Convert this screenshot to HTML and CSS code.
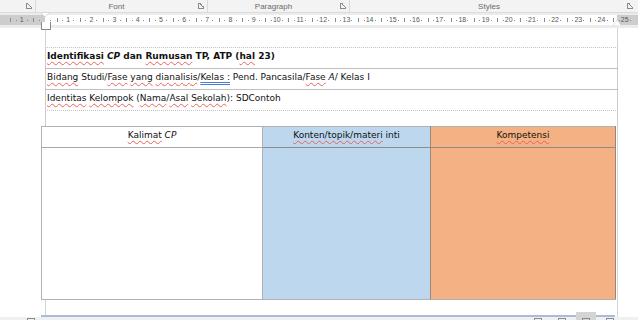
FILE: index.html
```html
<!DOCTYPE html>
<html lang="id">
<head>
    <meta charset="UTF-8">
    <title>Identifikasi CP - Word</title>
    <link rel="stylesheet" href="styles.css">
</head>
<body>
    <!-- ribbon group labels -->
    <div class="ribbon">
        <div class="group group-clip"><span class="launcher"></span></div>
        <div class="group group-font"><span class="group-label">Font</span><span class="launcher"></span></div>
        <div class="group group-para"><span class="group-label">Paragraph</span><span class="launcher"></span></div>
        <div class="group group-styles"><span class="group-label">Styles</span><span class="launcher"></span></div>
    </div>

    <!-- ruler -->
    <div class="ruler">
        <div class="ruler-strip">
            <div class="ruler-cells" id="ruler-cells"></div>
            <span class="indent indent-left"></span>
            <span class="indent indent-right"></span>
        </div>
    </div>

    <!-- document page -->
    <div class="page">
        <table class="info-table">
            <tr class="row-dotted"><td class="title"><u class="sp">Identifikasi</u> <i>CP</i> dan <u class="sp">Rumusan</u> TP, ATP (<u class="sp">hal</u> 23)</td></tr>
            <tr><td><u class="sp">Bidang</u> Studi/<u class="sp">Fase</u> <u class="sp">yang</u> <u class="sp">dianalisis</u>/<u class="gr">Kelas :</u> Pend. Pancasila/<u class="sp">Fase</u> <i>A</i>/ Kelas I</td></tr>
            <tr><td><u class="sp">Identitas</u> <u class="sp">Kelompok</u> (<u class="sp">Nama</u>/<u class="sp">Asal</u> <u class="sp">Sekolah</u>): SDContoh</td></tr>
            <tr class="row-empty"><td></td></tr>
        </table>

        <table class="cp-table">
            <tr class="head">
                <td class="col-cp"><u class="sp">Kalimat</u> <i>CP</i></td>
                <td class="col-konten"><u class="sp">Konten/topik/materi</u> inti</td>
                <td class="col-komp"><u class="sp">Kompetensi</u></td>
            </tr>
            <tr class="body-row">
                <td class="col-cp"></td>
                <td class="col-konten"></td>
                <td class="col-komp"></td>
            </tr>
        </table>

        <div class="page-end"></div>
    </div>

    <!-- status bar -->
    <div class="status">
        <span class="st-icon st-left"></span>
        <div class="st-right">
            <span class="st-icon"></span>
            <span class="st-icon"></span>
            <span class="st-icon st-active"></span>
            <span class="st-icon"></span>
        </div>
    </div>

    <script>
        // build the ruler numbers, one cell per centimetre
        const cells = document.getElementById('ruler-cells');
        const labels = ['1', ''];
        for (let i = 1; i <= 25; i++) {
            labels.push(String(i));
        }
        labels.forEach(function (txt) {
            const cell = document.createElement('span');
            cell.className = 'ruler-cell';
            cell.textContent = txt;
            cells.appendChild(cell);
        });
    </script>
</body>
</html>
```

FILE: styles.css
```css
* {
    box-sizing: border-box;
    margin: 0;
    padding: 0;
}
body {
    width: 638px;
    height: 320px;
    overflow: hidden;
    background: #fff;
    font-family: 'DejaVu Sans', sans-serif;
    display: flex;
    flex-direction: column;
}

/* Ribbon */
.ribbon {
    height: 13px;
    flex: none;
    display: flex;
    background: #f3f3f3;
    border-bottom: 1px solid #dcdcdc;
    font-family: 'Liberation Sans', sans-serif;
    font-size: 8px;
    color: #6a6a6a;
}
.group {
    position: relative;
    display: flex;
    align-items: center;
    justify-content: center;
    border-right: 1px solid #dadada;
    padding-right: 10px;
}
.group-clip { width: 36px; }
.group-font { width: 172px; }
.group-para { width: 142px; }
.group-styles { flex: 1; border-right: none; }
.launcher {
    position: absolute;
    right: 3px;
    top: 3px;
    width: 6px;
    height: 6px;
    border: 1px solid #8a8a8a;
    border-width: 0 0 1px 1px;
    background: linear-gradient(45deg, transparent 45%, #8a8a8a 45%, #8a8a8a 60%, transparent 60%);
}
.group-styles .launcher { right: 5px; }

/* Ruler */
.ruler {
    height: 15px;
    flex: none;
    background: #ececec;
    padding-top: 2px;
}
.ruler-strip {
    position: relative;
    height: 10px;
    background: linear-gradient(90deg, #cdcdcd 0 45px, #fff 45px 617px, #cdcdcd 617px);
}
.ruler-cells {
    display: flex;
    padding-left: 10.2px;
    height: 10px;
}
.ruler-cell {
    flex: none;
    width: 23.2px;
    height: 10px;
    text-align: center;
    font-family: 'Liberation Sans', sans-serif;
    font-size: 7px;
    line-height: 10px;
    color: #5a5a5a;
    background:
        linear-gradient(#8c8c8c, #8c8c8c) 0 3px / 1px 4px no-repeat,
        linear-gradient(#8c8c8c, #8c8c8c) 25% 5px / 1px 1px no-repeat,
        linear-gradient(#8c8c8c, #8c8c8c) 75% 5px / 1px 1px no-repeat;
}
.indent {
    position: absolute;
    width: 0;
    height: 0;
    border-left: 4px solid transparent;
    border-right: 4px solid transparent;
}
.indent-left {
    left: 41px;
    top: -2px;
    border-top: 4px solid #fff;
    filter: drop-shadow(0 0 0.5px #777);
}
.indent-left::after {
    content: "";
    position: absolute;
    left: -4px;
    top: 5px;
    width: 8px;
    height: 7px;
    border: 1px solid #888;
    border-top-width: 0;
    background: #fff;
}
.indent-right {
    left: 613px;
    top: 5px;
    border-bottom: 5px solid #fff;
    filter: drop-shadow(0 0 0.5px #777);
}

/* Page */
.page {
    flex: 1;
    padding: 19px 0 0 41px;
    background:
        linear-gradient(#d4d4d4, #d4d4d4) 45px 0 / 1px 100% no-repeat,
        linear-gradient(#d4d4d4, #d4d4d4) 617px 0 / 1px 100% no-repeat,
        #fff;
    font-size: 9px;
    color: #111;
}
table {
    border-collapse: collapse;
    table-layout: fixed;
}
.sp {
    text-decoration: underline wavy #e8645a;
    text-decoration-thickness: 1px;
    text-underline-offset: 2px;
}
.gr {
    text-decoration: underline double #4a7fd0;
    text-decoration-thickness: 1px;
    text-underline-offset: 2px;
}
.info-table {
    margin-left: 4px;
    width: 573px;
}
.info-table td {
    height: 21px;
    padding: 0 1px 4px;
    vertical-align: middle;
    border-left: 1px dotted #c4c4c4;
    border-right: 1px dotted #c4c4c4;
    border-bottom: 1px solid #c0c0c0;
}
.info-table tr:first-child td {
    border-top: 1px dotted #c4c4c4;
}
.info-table tr:nth-child(3) td {
    border-bottom: 1px dotted #c4c4c4;
}
.info-table .title {
    font-weight: bold;
}
.info-table .row-empty td {
    height: 15px;
    border-bottom: none;
}

.cp-table {
    width: 575px;
}
.cp-table td {
    border: 1px solid #b2b2b2;
    text-align: center;
    vertical-align: middle;
}
.cp-table .head td {
    height: 21px;
    padding-bottom: 4px;
    border-bottom-color: #a8a8a8;
}
.cp-table .body-row td {
    height: 152px;
}
.col-cp {
    width: 221px;
    background: #fff;
}
.col-konten {
    width: 168px;
    background: #bdd7ee;
    border-left-color: #bdd7ee !important;
    border-right-color: #9a8a80 !important;
}
.col-komp {
    background: #f4b183;
    border-right-color: #a08270 !important;
}
.cp-table .head .col-konten,
.cp-table .head .col-komp {
    border-bottom-color: #8c8c8c;
}

.page-end {
    height: 2px;
    width: 574px;
    margin-top: 15px;
    background: #a9bcd9;
}

/* Status bar */
.status {
    height: 5px;
    flex: none;
    background: #f0f0f0;
    display: flex;
    justify-content: space-between;
    padding: 1px 24px 0 27px;
}
.st-icon {
    display: block;
    width: 8px;
    height: 6px;
    border: 1px solid #8c8c8c;
    border-bottom: none;
}
.st-right {
    display: flex;
    gap: 16px;
}
.st-active {
    box-shadow: 0 0 0 6px #d4d4d4;
    background: #d4d4d4;
}
```
